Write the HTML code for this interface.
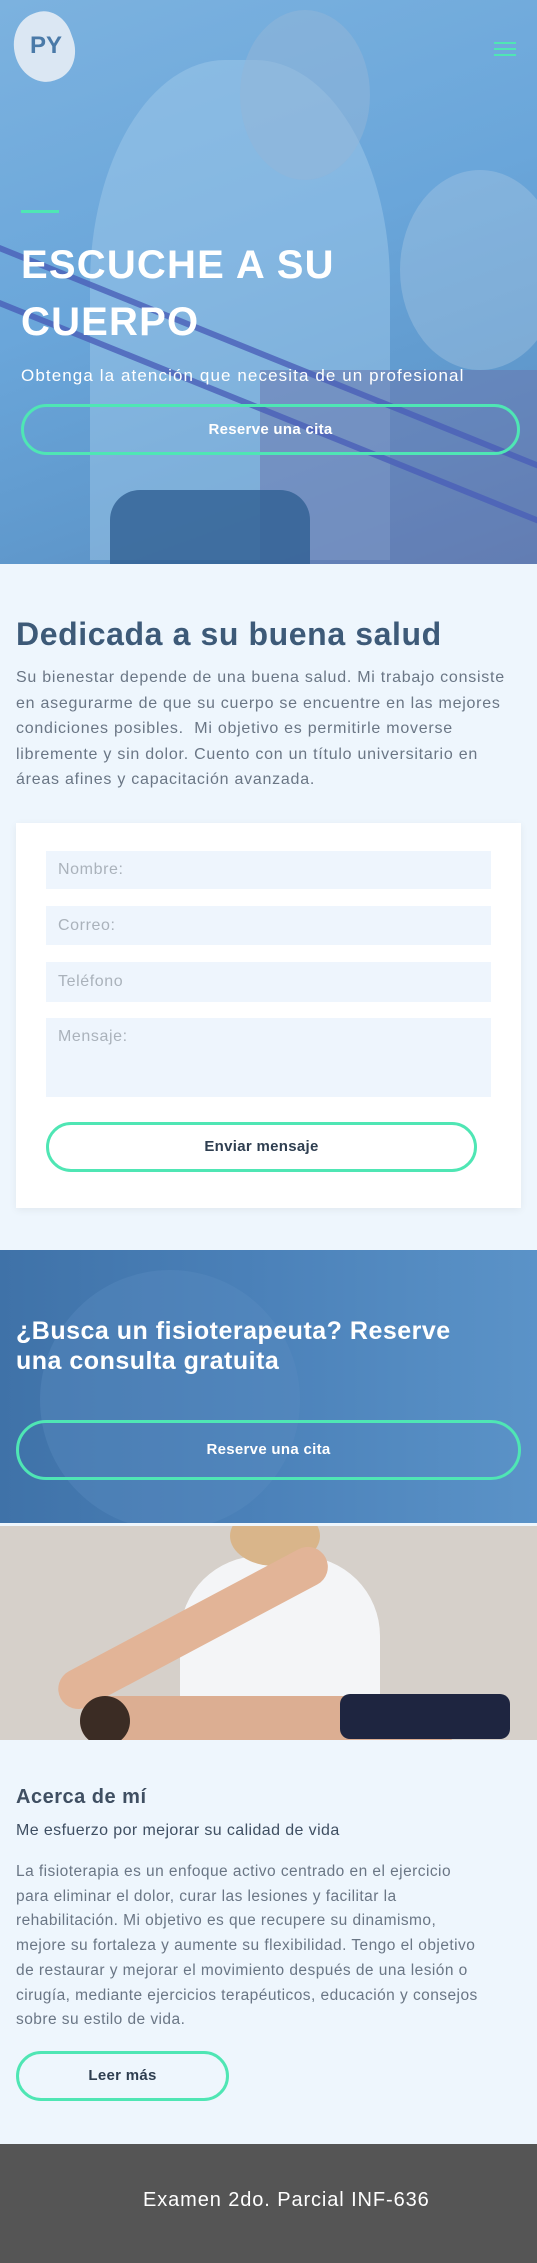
<!DOCTYPE html>
<html><head><meta charset="utf-8"><style>
*{margin:0;padding:0;box-sizing:border-box}
body{width:537px;height:2263px;font-family:"Liberation Sans",sans-serif;background:#eef6fd;overflow:hidden;position:relative}
.hero{position:absolute;left:0;top:0;width:537px;height:564px;background:linear-gradient(160deg,#7cb2df 0%,#6aa6da 45%,#5f98cc 75%,#5a83b8 100%);overflow:hidden}
.abs{position:absolute}
.nw{white-space:nowrap}
.btn{position:absolute;border:3px solid #4fe6b4;border-radius:40px;text-align:center;font-weight:bold;font-size:15px;letter-spacing:.3px}
.inp{position:absolute;left:46px;width:445px;background:#eef5fd;color:#aab2bb;font-size:16px;padding-left:12px;letter-spacing:.6px}
</style></head><body>
<div class="hero">
  <div class="abs" style="left:90px;top:60px;width:300px;height:500px;background:#a4cbec;opacity:.45;border-radius:45% 45% 0 0"></div>
  <div class="abs" style="left:240px;top:10px;width:130px;height:170px;background:#93b6d8;border-radius:50%;opacity:.5"></div>
  <div class="abs" style="left:400px;top:170px;width:160px;height:200px;background:#a9c7e4;border-radius:50%;opacity:.4"></div>
  <div class="abs" style="left:260px;top:370px;width:300px;height:200px;background:#6a78ae;opacity:.55"></div>
  <div class="abs" style="left:110px;top:490px;width:200px;height:80px;background:#2f5f92;opacity:.8;border-radius:30px 30px 0 0"></div>
  <div class="abs" style="left:0;top:245px;width:640px;height:6px;background:#4a5fb8;opacity:.8;transform:rotate(22deg);transform-origin:0 0"></div>
  <div class="abs" style="left:0;top:300px;width:640px;height:6px;background:#4a5fb8;opacity:.8;transform:rotate(22deg);transform-origin:0 0"></div>
  <div class="abs" style="left:14px;top:12px;width:60px;height:70px;background:#e6edf5;border-radius:55% 45% 50% 50%;transform:rotate(-20deg);opacity:.9"></div>
  <div class="abs" style="left:30px;top:32px;font-weight:bold;font-size:24px;color:#4a7aa8">PY</div>
  <div class="abs" style="left:494px;top:42px;width:22px;height:2px;background:#4fe6b4;box-shadow:0 6px 0 #4fe6b4,0 12px 0 #4fe6b4"></div>
  <div class="abs" style="left:21px;top:210px;width:38px;height:3px;background:#4fe6b4"></div>
  <div class="abs nw" style="left:21px;top:237px;color:#fff;font-weight:bold;font-size:40px;line-height:57px;letter-spacing:1.2px">ESCUCHE A SU<br>CUERPO</div>
  <div class="abs nw" style="left:21px;top:366px;color:#fff;font-size:17px;letter-spacing:1.1px">Obtenga la atención que necesita de un profesional</div>
  <div class="btn" style="left:21px;top:404px;width:499px;height:51px;line-height:45px;color:#fff">Reserve una cita</div>
</div>
<div class="abs nw" style="left:16px;top:616px;color:#3d5a78;font-weight:bold;font-size:32px;letter-spacing:.6px">Dedicada a su buena salud</div>
<div class="abs nw" style="left:16px;top:665px;color:#6a7685;font-size:16px;line-height:25.5px;letter-spacing:.75px">Su bienestar depende de una buena salud. Mi trabajo consiste<br>en asegurarme de que su cuerpo se encuentre en las mejores<br>condiciones posibles.&nbsp; Mi objetivo es permitirle moverse<br>libremente y sin dolor. Cuento con un título universitario en<br>áreas afines y capacitación avanzada.</div>
<div class="abs" style="left:16px;top:823px;width:505px;height:385px;background:#fff;box-shadow:0 2px 8px rgba(0,0,0,.06)"></div>
<div class="inp" style="top:851px;height:38px;line-height:38px">Nombre:</div>
<div class="inp" style="top:906px;height:39px;line-height:39px">Correo:</div>
<div class="inp" style="top:962px;height:40px;line-height:40px">Teléfono</div>
<div class="inp" style="top:1018px;height:79px;padding-top:10px">Mensaje:</div>
<div class="btn" style="left:46px;top:1122px;width:431px;height:50px;line-height:44px;color:#2e3e50;background:#fff">Enviar mensaje</div>
<div class="abs" style="left:0;top:1250px;width:537px;height:273px;background:linear-gradient(90deg,#3f72a8 0%,#4a80b8 45%,#5b93c8 100%);overflow:hidden">
  <div class="abs" style="left:40px;top:20px;width:260px;height:260px;background:#5a8cc0;border-radius:50%;opacity:.4"></div>
  <div class="abs nw" style="left:16px;top:66px;color:#fff;font-weight:bold;font-size:25px;line-height:30px;letter-spacing:.5px">¿Busca un fisioterapeuta? Reserve<br>una consulta gratuita</div>
  <div class="btn" style="left:16px;top:170px;width:505px;height:60px;line-height:54px;color:#fff">Reserve una cita</div>
</div>
<div class="abs" style="left:0;top:1526px;width:537px;height:214px;background:#d6d0ca;overflow:hidden">
  <div class="abs" style="left:180px;top:30px;width:200px;height:200px;background:#f4f5f7;border-radius:40% 40% 0 0"></div>
  <div class="abs" style="left:230px;top:-20px;width:90px;height:60px;background:#d9b58a;border-radius:50%"></div>
  <div class="abs" style="left:70px;top:150px;width:300px;height:40px;background:#e2b497;transform:rotate(-28deg);transform-origin:0 100%;border-radius:20px"></div>
  <div class="abs" style="left:80px;top:170px;width:380px;height:50px;background:#dcae92;border-radius:25px"></div>
  <div class="abs" style="left:340px;top:168px;width:170px;height:45px;background:#1e2540;border-radius:10px"></div>
  <div class="abs" style="left:80px;top:170px;width:50px;height:50px;background:#3b2c24;border-radius:50%"></div>
</div>
<div class="abs nw" style="left:16px;top:1786px;color:#3f4f62;font-weight:bold;font-size:20px;letter-spacing:.5px">Acerca de mí</div>
<div class="abs nw" style="left:16px;top:1822px;color:#3f4f62;font-size:16px;letter-spacing:.4px">Me esfuerzo por mejorar su calidad de vida</div>
<div class="abs nw" style="left:16px;top:1860px;color:#6a7685;font-size:15.5px;line-height:24.7px;letter-spacing:.45px">La fisioterapia es un enfoque activo centrado en el ejercicio<br>para eliminar el dolor, curar las lesiones y facilitar la<br>rehabilitación. Mi objetivo es que recupere su dinamismo,<br>mejore su fortaleza y aumente su flexibilidad. Tengo el objetivo<br>de restaurar y mejorar el movimiento después de una lesión o<br>cirugía, mediante ejercicios terapéuticos, educación y consejos<br>sobre su estilo de vida.</div>
<div class="btn" style="left:16px;top:2051px;width:213px;height:50px;line-height:44px;color:#2e3e50">Leer más</div>
<div class="abs" style="left:0;top:2144px;width:537px;height:119px;background:#555"></div>
<div class="abs nw" style="left:143px;top:2189px;color:#fff;font-size:20px;letter-spacing:.9px">Examen 2do. Parcial INF-636</div>
</body></html>
